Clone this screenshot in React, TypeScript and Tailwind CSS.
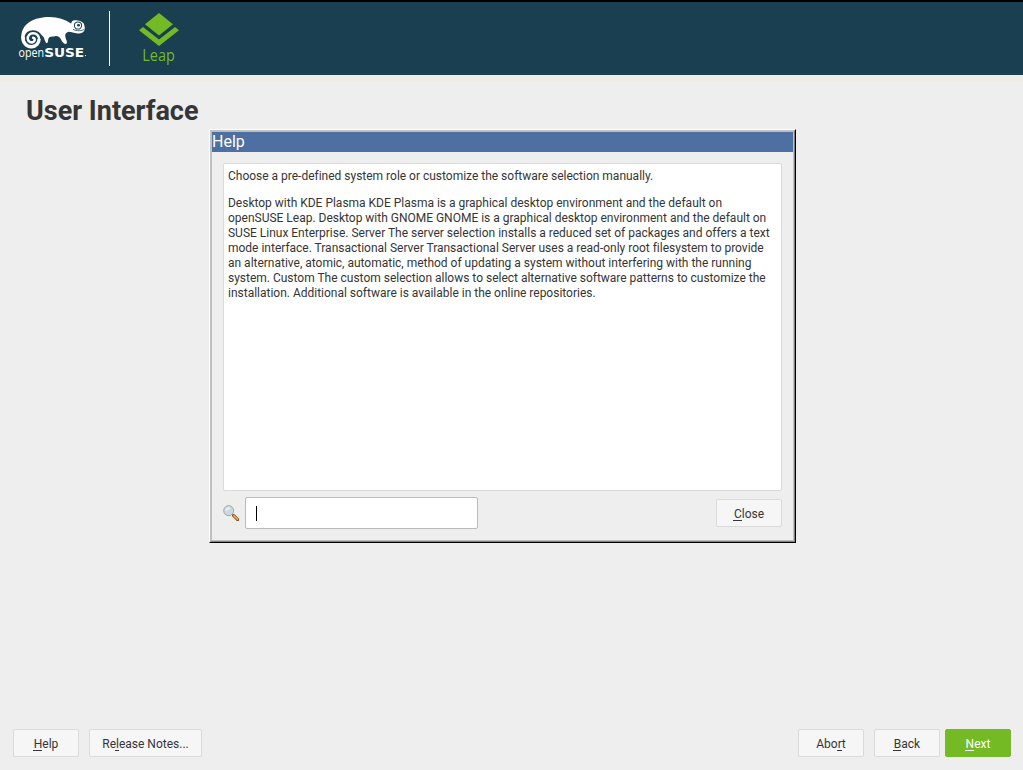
import type { ReactNode } from "react";

function Key({ children }: { children: ReactNode }) {
  return <span className="-ml-px inline-block border-b border-current pl-px leading-[11px]">{children}</span>;
}

function Button({ className = "w-[66px]", primary = false, children }: { className?: string; primary?: boolean; children: ReactNode }) {
  const tone = primary ? "border-[#73ba25] bg-[#73ba25] text-white" : "border-[#dadada] bg-[#f6f6f6] text-[#353535]";
  return (
    <button className={`h-7 shrink-0 rounded-[2px] border pt-[3px] text-center text-[12px] leading-[15px] whitespace-pre ${tone} ${className}`}>
      {children}
    </button>
  );
}

function Logo() {
  return (
    <svg className="mt-[11px] ml-[18px] h-[50px] w-[70px] shrink-0" viewBox="18 13 70 50" fill="none">
      <path
        fill="#fff"
        d="M21.300 38C21 31 24 25.500 29.500 22 35 18.500 43 17 50 17.100 58 17.200 65 19.500 71 23.600 71.600 23.200 71.400 21.500 72.800 20.800 75.500 19.700 81 20.500 83.800 23.500 84.400 25.500 85 27.500 84.800 29.500 84 32.500 81 33.700 77.500 33.400 74 33.100 71.500 31.800 68.500 31.700 65.500 32.500 64.800 35 65.500 37.500 66 39.500 67.500 41.500 66.700 43.500 64.500 45 62.500 42.500 61 39.500 60 37 57.500 35.700 55 36.200 52.500 36.800 50 36 48.600 38.200 47.700 40 48.600 42.700 46.500 43.200 44.500 41.500 44.800 37.500 42 35.500 38.500 29.500 31 28.800 27 32.300 24.500 34.500 24.200 37 25.200 40Z"
      />
      <path stroke="#fff" strokeWidth="3.400" d="M23 36.500C22.300 42.500 26.500 47 31.500 46.800 36.500 46.500 39.300 42.700 38.900 39" />
      <path stroke="#fff" strokeWidth="2.500" strokeLinecap="round" d="M39.200 39.500C39.200 35.500 36.500 33.100 33 33.200 29.500 33.300 27.400 36 27.800 39 28.200 42 31.500 43.200 33.600 41.700 35.500 40.300 34.900 38 33.100 37.700" />
      <circle cx="78" cy="25.500" r="3.600" stroke="#193f50" strokeWidth="1.050" />
      <ellipse cx="78.500" cy="25.200" rx="1.500" ry="1.200" fill="#193f50" />
      <path stroke="#193f50" strokeWidth=".8" d="M84.600 29C82 31.200 77 31.300 73 29.400" />
      <g fill="#fff">
        <text x="18.500" y="56.500" fontFamily="Open Sans, sans-serif" fontSize="12" textLength="25.500" lengthAdjust="spacingAndGlyphs">open</text>
        <text x="44.200" y="56.500" fontFamily="DejaVu Sans, sans-serif" fontWeight="700" fontSize="12.500" textLength="40" lengthAdjust="spacingAndGlyphs">SUSE</text>
        <circle cx="85.500" cy="55.500" r=".6" />
      </g>
    </svg>
  );
}

function Leap() {
  return (
    <div className="mt-[11px] ml-[29px] flex w-10 flex-col items-center text-[#73ba25]">
      <svg className="h-[33px] w-10" viewBox="0 0 40 33" fill="currentColor">
        <path d="M20 0 34 11.200 20 22.400 6 11.200Z" />
        <path d="M0 17.300 4 14.100 20 26.500 36 14.100 40 17.300 20 33Z" />
      </svg>
      <svg className="h-[20px] w-10 overflow-visible" viewBox="0 0 40 20" fill="currentColor">
        <text x="3.300" y="15" fontFamily="Open Sans, sans-serif" fontSize="15.500" textLength="32.500" lengthAdjust="spacingAndGlyphs">Leap</text>
      </svg>
    </div>
  );
}

export default function App() {
  return (
    <div className="flex h-[770px] w-[1023px] flex-col overflow-hidden bg-[#eeeeee] font-['Roboto',sans-serif] text-[#353535]">
      <header className="flex h-[75px] shrink-0 border-t-2 border-black bg-[#193f50]">
        <Logo />
        <div className="mt-[9px] ml-[21px] h-[55px] w-px bg-white" />
        <Leap />
      </header>
      <div className="h-[6px] shrink-0 bg-[#efece8]" />
      <h1 className="mt-[14px] ml-[26px] h-[34px] shrink-0 text-[27px] leading-[32px] font-bold">User Interface</h1>

      <section className="ml-[209px] h-[414px] w-[587px] shrink-0 border border-t-white border-r-black border-b-black border-l-white">
        <div className="h-full border border-t-[#c0c0c0] border-r-[#808080] border-b-[#808080] border-l-[#c0c0c0]">
          <div className="flex h-full flex-col border border-[#c0c0c0]">
            <div className="h-5 shrink-0 bg-[#4e6fa1] text-[16px] leading-[19px] text-white">Help</div>
            <div className="mx-[11px] mt-[11px] h-[328px] shrink-0 rounded-[2px] border border-[#dadada] bg-white px-1 pt-[5px] text-[12px] leading-[15px] tracking-[-0.008px] whitespace-nowrap">
              <p className="mb-3">Choose a pre-defined system role or customize the software selection manually.</p>
              <p>
                Desktop with KDE Plasma KDE Plasma is a graphical desktop environment and the default on<br />
                openSUSE Leap. Desktop with GNOME GNOME is a graphical desktop environment and the default on<br />
                SUSE Linux Enterprise. Server The server selection installs a reduced set of packages and offers a text<br />
                mode interface. Transactional Server Transactional Server uses a read-only root filesystem to provide<br />
                an alternative, atomic, automatic, method of updating a system without interfering with the running<br />
                system. Custom The custom selection allows to select alternative software patterns to customize the<br />
                installation. Additional software is available in the online repositories.
              </p>
            </div>
            <div className="mx-[11px] mt-[6px] flex h-8 items-center">
              <svg className="h-4 w-4" viewBox="0 0 16 16">
                <path d="m9.200 9.200 2 2" stroke="#777b83" strokeWidth="1.500" />
                <path d="m10.700 10.700 4 4" stroke="#874d20" strokeWidth="3.200" strokeLinecap="round" />
                <path d="m11 10.800 3.400 3.400" stroke="#f3ae3e" strokeWidth="1.700" strokeLinecap="round" />
                <circle cx="5.700" cy="5.700" r="5" fill="#ccd7df" stroke="#a1a6a8" />
                <path d="M2.300 6a3.500 3.500 0 0 1 5-3.400c-.5 2-2.500 3-5 3.400Z" fill="#eaf0f3" />
              </svg>
              <div className="ml-[6px] flex h-8 w-[233px] items-center rounded-[2px] border border-[#bababa] bg-white pl-[10px]">
                <span className="h-[15px] w-px bg-black" />
              </div>
              <Button className="ml-auto w-[66px]"><Key>C</Key>lose</Button>
            </div>
          </div>
        </div>
      </section>

      <footer className="mt-auto mb-[13px] flex pr-3 pl-[13px]">
        <Button><Key>H</Key>elp</Button>
        <Button className="ml-[10px] w-[113px]">Re<Key>l</Key>ease Notes...</Button>
        <Button className="ml-auto w-[66px]">Abo<Key>r</Key>t</Button>
        <Button className="ml-[10px] w-[66px]"><Key>B</Key>ack</Button>
        <Button className="ml-[5px] w-[66px]" primary><Key>N</Key>ext</Button>
      </footer>
    </div>
  );
}
